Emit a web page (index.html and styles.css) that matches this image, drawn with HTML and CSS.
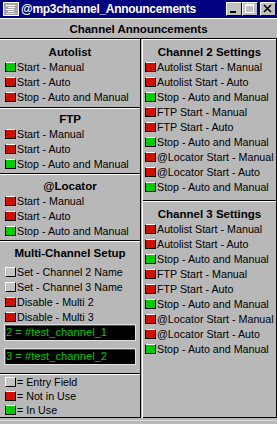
FILE: index.html
```html
<!DOCTYPE html>
<html lang="en">
<head>
    <meta charset="UTF-8">
    <title>@mp3channel_Announcements</title>
    <link rel="stylesheet" href="styles.css">
</head>
<body>
<div class="window">

    <div class="titlebar">
        <svg class="app-icon" width="16" height="14" viewBox="0 0 16 14">
            <rect x="0.5" y="0.5" width="15" height="13" fill="#a8a8a8" stroke="#ffffff"/>
            <rect x="3" y="3" width="9" height="1" fill="#ffffff"/>
            <rect x="5" y="5" width="7" height="1" fill="#ffffff"/>
            <rect x="3" y="7" width="8" height="1" fill="#ffffff"/>
            <rect x="5" y="9" width="6" height="1" fill="#ffffff"/>
            <rect x="3" y="11" width="9" height="1" fill="#e0e0e0"/>
        </svg>
        <span class="title">@mp3channel_Announcements</span>
        <div class="controls">
            <span class="ctl">
                <svg width="14" height="12" viewBox="0 0 14 12"><rect x="3" y="8" width="6" height="2" fill="#000"/></svg>
            </span>
            <span class="ctl">
                <svg width="14" height="12" viewBox="0 0 14 12"><rect x="2.5" y="1.5" width="8" height="8" fill="none" stroke="#fff"/><rect x="2" y="1" width="9" height="2" fill="#fff"/></svg>
            </span>
            <span class="ctl close">
                <svg width="14" height="12" viewBox="0 0 14 12"><path d="M3 2 L10 9 M10 2 L3 9" stroke="#000" stroke-width="1.6"/></svg>
            </span>
        </div>
    </div>

    <div class="banner">Channel Announcements</div>

    <div class="columns">
        <div class="col col-left">
            <div class="group g-autolist">
                <h3>Autolist</h3>
                <div class="opt"><i class="led on"></i>Start - Manual</div>
                <div class="opt"><i class="led off"></i>Start - Auto</div>
                <div class="opt"><i class="led off"></i>Stop - Auto and Manual</div>
            </div>
            <div class="group g-ftp">
                <h3>FTP</h3>
                <div class="opt"><i class="led off"></i>Start - Manual</div>
                <div class="opt"><i class="led off"></i>Start - Auto</div>
                <div class="opt"><i class="led on"></i>Stop - Auto and Manual</div>
            </div>
            <div class="group g-locator">
                <h3>@Locator</h3>
                <div class="opt"><i class="led off"></i>Start - Manual</div>
                <div class="opt"><i class="led off"></i>Start - Auto</div>
                <div class="opt"><i class="led on"></i>Stop - Auto and Manual</div>
            </div>
            <div class="group g-multi">
                <h3>Multi-Channel Setup</h3>
                <div class="opt"><i class="led blank"></i>Set - Channel 2 Name</div>
                <div class="opt"><i class="led blank"></i>Set - Channel 3 Name</div>
                <div class="opt"><i class="led off"></i>Disable - Multi 2</div>
                <div class="opt"><i class="led off"></i>Disable - Multi 3</div>
                <div class="field">2 = #test_channel_1</div>
                <div class="field field-2">3 = #test_channel_2</div>
            </div>
            <div class="group g-legend">
                <div class="opt"><i class="led blank"></i>= Entry Field</div>
                <div class="opt"><i class="led off"></i>= Not in Use</div>
                <div class="opt"><i class="led on"></i>= In Use</div>
            </div>
        </div>

        <div class="col col-right">
            <div class="group g-ch2">
                <h3>Channel 2 Settings</h3>
                <div class="opt"><i class="led off"></i>Autolist Start - Manual</div>
                <div class="opt"><i class="led off"></i>Autolist Start - Auto</div>
                <div class="opt"><i class="led on"></i>Stop - Auto and Manual</div>
                <div class="opt"><i class="led off"></i>FTP Start - Manual</div>
                <div class="opt"><i class="led off"></i>FTP Start - Auto</div>
                <div class="opt"><i class="led on"></i>Stop - Auto and Manual</div>
                <div class="opt"><i class="led off"></i>@Locator Start - Manual</div>
                <div class="opt"><i class="led off"></i>@Locator Start - Auto</div>
                <div class="opt"><i class="led on"></i>Stop - Auto and Manual</div>
            </div>
            <div class="group g-ch3">
                <h3>Channel 3 Settings</h3>
                <div class="opt"><i class="led off"></i>Autolist Start - Manual</div>
                <div class="opt"><i class="led off"></i>Autolist Start - Auto</div>
                <div class="opt"><i class="led on"></i>Stop - Auto and Manual</div>
                <div class="opt"><i class="led off"></i>FTP Start - Manual</div>
                <div class="opt"><i class="led off"></i>FTP Start - Auto</div>
                <div class="opt"><i class="led on"></i>Stop - Auto and Manual</div>
                <div class="opt"><i class="led off"></i>@Locator Start - Manual</div>
                <div class="opt"><i class="led off"></i>@Locator Start - Auto</div>
                <div class="opt"><i class="led on"></i>Stop - Auto and Manual</div>
            </div>
        </div>
    </div>

    <div class="statusbar"></div>
</div>
</body>
</html>
```

FILE: styles.css
```css
body {
    margin: 0;
    padding: 0;
    background-color: #b8b8b8;
    font-family: "Liberation Sans", Arial, sans-serif;
    color: #000;
}

.window {
    width: 277px;
    height: 424px;
    display: flex;
    flex-direction: column;
    background-color: #b8b8b8;
    overflow: hidden;
}

/* title bar */
.titlebar {
    height: 18px;
    flex-shrink: 0;
    background-color: #000080;
    color: #fff;
    display: flex;
    align-items: center;
}

.app-icon {
    margin-left: 3px;
    margin-right: 2px;
    flex-shrink: 0;
}

.title {
    flex: 1;
    font-weight: bold;
    font-size: 12px;
    letter-spacing: -0.3px;
    white-space: nowrap;
}

.controls {
    display: flex;
    margin-right: 1px;
}

.ctl {
    width: 16px;
    height: 14px;
    box-sizing: border-box;
    background-color: #c0c0c0;
    border: 1px solid;
    border-color: #fff #000 #000 #fff;
    display: flex;
}

.ctl.close {
    margin-left: 2px;
}

/* banner */
.banner {
    flex-shrink: 0;
    border-top: 1px solid #fff;
    border-bottom: 1px solid #000;
    padding-top: 1px;
    height: 18px;
    line-height: 18px;
    text-align: center;
    font-weight: bold;
    font-size: 11.5px;
}

/* columns */
.columns {
    display: flex;
    height: 379px;
    flex-shrink: 0;
}

.col {
    display: flex;
    flex-direction: column;
}

.col-left {
    width: 140px;
    border-right: 1px solid #000;
}

.col-right {
    width: 133px;
    margin-left: 1px;
    border-left: 1px solid #fff;
    border-right: 1px solid #000;
}

.group {
    border-top: 1px solid #fff;
    border-bottom: 1px solid #000;
}

.group h3 {
    margin: 0;
    font-size: 11.5px;
    line-height: 14px;
    text-align: center;
    font-weight: bold;
}

.g-autolist { padding: 5px 0 3px; }
.g-ftp { padding: 3px 0 2px; }
.g-locator { padding: 4px 0 2px; }
.g-multi { padding: 4px 0 8px; }
.g-multi h3 { margin-bottom: 4px; }
.g-legend { padding: 0; }
.g-legend .opt { height: 14px; }
.g-ch2 { padding: 5px 0 6px; }
.g-ch3 { padding: 5px 0 0; flex: 1; }

.opt {
    height: 15px;
    display: flex;
    align-items: center;
    padding-left: 5px;
    font-size: 10.7px;
    white-space: nowrap;
}

.col-right .opt {
    padding-left: 2px;
}

.led {
    width: 11px;
    height: 10px;
    box-sizing: border-box;
    margin-right: 1px;
    flex-shrink: 0;
    border: 1px solid;
    border-color: #fff #000 #000 #000;
}

.led.off { background-color: #cc1100; }
.led.on { background-color: #00cc00; }
.led.blank {
    background-color: #c4c4c4;
    border-color: #fff #000 #000 #fff;
}

/* channel name fields */
.field {
    margin: 0 4px;
    height: 17px;
    box-sizing: border-box;
    border: 1px solid #e0e0e0;
    box-shadow: inset 1px 1px 0 #505050;
    background-color: #000;
    color: #00c800;
    font-size: 11.2px;
    line-height: 15px;
    padding-left: 1px;
    white-space: nowrap;
}

.field-2 {
    margin-top: 7px;
}

.statusbar {
    flex: 1;
    margin-top: 2px;
    border-top: 1px solid #d8d8d8;
}
```
